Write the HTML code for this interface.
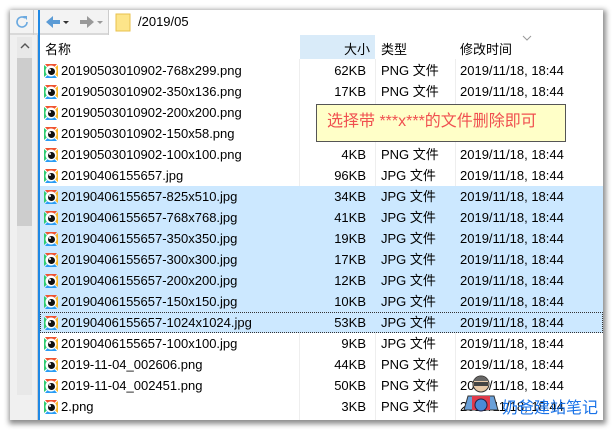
<!DOCTYPE html>
<html><head><meta charset="utf-8"><style>
*{margin:0;padding:0;box-sizing:border-box}
body{width:613px;height:431px;background:#fff;position:relative;overflow:hidden;font-family:"Liberation Sans","Noto Sans CJK SC",sans-serif;font-size:13px;color:#000}
.win{position:absolute;left:10px;top:10px;width:593px;height:410px;background:#fff;box-shadow:1px 2px 5px 2px rgba(0,0,0,.45);overflow:hidden}
.tb{position:absolute;left:0;top:0;width:593px;height:25px;background:#f3f3f3;border-bottom:2px solid #d9d9d9}
.left{position:absolute;left:0;top:25px;width:28px;height:385px;background:#f0f0f0;border-right:1px solid #ccc}
.sb{position:absolute;left:7px;top:27px;width:15px;height:358px;background:#e8e8e8}
.thumb{position:absolute;left:7px;top:48px;width:15px;height:168px;background:#cdcdcd}
.bline{position:absolute;left:28px;top:0;width:2px;height:410px;background:#1e88e5}
.sep1{position:absolute;left:23px;top:0;width:1px;height:25px;background:#ccc}
.addr{position:absolute;left:98px;top:0;width:495px;height:25px;background:#fff;border-left:1px solid #ccc}
.hdr{position:absolute;left:30px;top:25px;width:563px;height:24px;font-size:13px}
.row{position:absolute;left:30px;width:563px;height:21px;line-height:21px;white-space:nowrap}
.sel{background:#cce8ff}
.foc{outline:1px dotted #333;outline-offset:-1px}
.ic{position:absolute;left:3px;top:3px;width:16px;height:16px}
.nm{position:absolute;left:21px}
.sz{position:absolute;right:237px}
.ty{position:absolute;left:341px}
.dt{position:absolute;left:420px}
.vl{position:absolute;top:49px;width:1px;height:361px;background:#eee}
.tip{position:absolute;left:306px;top:94px;width:250px;height:38px;background:#ffffc8;border:1px solid #555;color:#f05050;font-size:16px;line-height:34px;padding-left:10px}
.logo{position:absolute;left:502px;top:394px;color:#1a73e8;font-size:16px}
</style></head><body>
<div class="win">
<div class="tb">
 <svg style="position:absolute;left:4px;top:4px" width="16" height="16" viewBox="0 0 16 16"><path d="M13 8a5 5 0 1 1-2-4" fill="none" stroke="#6aa9e0" stroke-width="1.6"/><path d="M9 2h4v4z" fill="#6aa9e0"/></svg>
 <div class="sep1"></div>
 <svg style="position:absolute;left:34px;top:4px" width="60" height="16" viewBox="0 0 60 16"><path d="M2 8l7-6v4h7v4H9v4z" fill="#5b9bd5"/><path d="M19 7l3 3 3-3z" fill="#333"/><path d="M50 8l-7-6v4h-7v4h7v4z" fill="#999"/><path d="M53 7l3 3 3-3z" fill="#999"/></svg>
</div>
<div class="addr"><svg style="position:absolute;left:6px;top:3px" width="16" height="19" viewBox="0 0 16 19"><rect x="1" y="1" width="14" height="17" fill="#fde58a" stroke="#e8c14e"/></svg><span style="position:absolute;left:29px;top:4px;font-size:13px">/2019/05</span></div>
<div class="left"></div><div class="sb"></div><div class="thumb"></div>
<svg style="position:absolute;left:10px;top:32px" width="10" height="8" viewBox="0 0 10 8"><path d="M1 6l4-4 4 4" fill="none" stroke="#555" stroke-width="1.4"/></svg>
<div class="bline"></div>
<div class="hdr">
 <div style="position:absolute;left:260px;top:0;width:75px;height:24px;background:#d9ebf9"></div>
 <span style="position:absolute;left:5px;top:4px">名称</span>
 <span style="position:absolute;left:304px;top:4px">大小</span>
 <span style="position:absolute;left:341px;top:4px">类型</span>
 <span style="position:absolute;left:420px;top:4px">修改时间</span>
 <svg style="position:absolute;left:482px;top:0" width="10" height="6"><path d="M1 1l4 4 4-4" fill="none" stroke="#999"/></svg>
</div>
<div class="vl" style="left:289px"></div><div class="vl" style="left:365px"></div><div class="vl" style="left:445px"></div>
<div id="rows"></div>
<div class="tip">选择带 ***x***的文件删除即可</div>
</div>
<svg style="position:absolute;left:460px;top:374px" width="42" height="40" viewBox="0 0 42 40"><circle cx="21" cy="10" r="8" fill="#e8c9a8" stroke="#333"/><path d="M13 7q8-9 16 0z" fill="#666"/><rect x="14" y="8" width="14" height="4" fill="#444"/><path d="M4 36l4-14h26l4 14z" fill="#6aa0d8" stroke="#333"/><path d="M12 22h18v14H12z" fill="#e03a4a"/><ellipse cx="21" cy="31" rx="6" ry="6" fill="#4a8ad8" stroke="#224"/></svg>
<div class="logo">奶爸建站笔记</div>
<script>
var d=[["20190503010902-768x299.png","62KB","PNG 文件"],["20190503010902-350x136.png","17KB","PNG 文件"],["20190503010902-200x200.png","",""],["20190503010902-150x58.png","",""],["20190503010902-100x100.png","4KB","PNG 文件"],["20190406155657.jpg","96KB","JPG 文件"],["20190406155657-825x510.jpg","34KB","JPG 文件"],["20190406155657-768x768.jpg","41KB","JPG 文件"],["20190406155657-350x350.jpg","19KB","JPG 文件"],["20190406155657-300x300.jpg","17KB","JPG 文件"],["20190406155657-200x200.jpg","12KB","JPG 文件"],["20190406155657-150x150.jpg","10KB","JPG 文件"],["20190406155657-1024x1024.jpg","53KB","JPG 文件"],["20190406155657-100x100.jpg","9KB","JPG 文件"],["2019-11-04_002606.png","44KB","PNG 文件"],["2019-11-04_002451.png","50KB","PNG 文件"],["2.png","3KB","PNG 文件"]];
var ic='<svg class="ic" viewBox="0 0 16 16"><path d="M8 8L2 1h12z" fill="#f0532f"/><path d="M8 8l7-6v12z" fill="#fbb829"/><path d="M8 8l6 7H2z" fill="#2a9df4"/><path d="M8 8L1 14V2z" fill="#2ecc71"/><circle cx="8" cy="8" r="5.5" fill="#fff"/><circle cx="8.5" cy="8.5" r="3.5" fill="#111"/><circle cx="7" cy="7" r="1" fill="#fff"/></svg>';
var h='';d.forEach(function(r,i){var c='row'+(i>=6&&i<=12?' sel':'')+(i==12?' foc':'');
h+='<div class="'+c+'" style="top:'+(50+21*i)+'px">'+ic+'<span class="nm">'+r[0]+'</span>'+(r[1]?'<span class="sz">'+r[1]+'</span><span class="ty">'+r[2]+'</span><span class="dt">2019/11/18, 18:44</span>':'')+'</div>';});
document.getElementById('rows').outerHTML=h;
</script>
</body></html>
